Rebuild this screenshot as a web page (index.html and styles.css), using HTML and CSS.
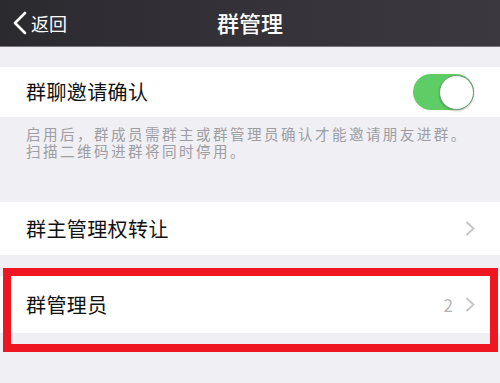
FILE: index.html
```html
<!DOCTYPE html>
<html lang="zh-CN">
<head>
<meta charset="utf-8">
<link rel="stylesheet" href="styles.css">
</head>
<body>
<div class="screen">
  <header class="navbar">
    <div class="back">
      <svg class="back-icon" width="16" height="24" viewBox="0 0 16 24"><polyline points="13,2 3,12 13,22" fill="none" stroke="#fff" stroke-width="2.6" stroke-linecap="round" stroke-linejoin="round"/></svg>
      <span class="back-text">返回</span>
    </div>
    <div class="title">群管理</div>
  </header>
  <div class="gap gap-top"></div>
  <div class="row row-1">
    <span class="label">群聊邀请确认</span>
    <div class="switch"><div class="knob"></div></div>
  </div>
  <div class="desc">
    <div class="desc-line">启用后，群成员需群主或群管理员确认才能邀请朋友进群。</div>
    <div class="desc-line">扫描二维码进群将同时停用。</div>
  </div>
  <div class="row row-2">
    <span class="label">群主管理权转让</span>
    <svg class="chev" width="10" height="15" viewBox="0 0 10 15"><polyline points="1.5,1 8.5,7.5 1.5,14" fill="none" stroke="#c4c4c8" stroke-width="1.8"/></svg>
  </div>
  <div class="gap gap-mid"></div>
  <div class="row row-3">
    <span class="label">群管理员</span>
    <span class="value">2</span>
    <svg class="chev" width="10" height="15" viewBox="0 0 10 15"><polyline points="1.5,1 8.5,7.5 1.5,14" fill="none" stroke="#c4c4c8" stroke-width="1.8"/></svg>
  </div>
  <div class="highlight"></div>
</div>
</body>
</html>
```
FILE: styles.css
```css
* { box-sizing: border-box; }
html, body { margin: 0; padding: 0; }
body {
  width: 500px;
  height: 383px;
  overflow: hidden;
  background: #efeff4;
  font-family: "Noto Sans CJK SC", "Noto Sans", sans-serif;
}
.screen {
  position: relative;
  width: 500px;
  height: 383px;
  background: #efeff4;
}
.navbar {
  position: relative;
  height: 47px;
  background: linear-gradient(to right, #2b2a2f, #36343a 60%, #3b383f);
  border-bottom: 1px solid #77767c;
  display: flex;
  align-items: center;
  justify-content: center;
}
.back {
  position: absolute;
  left: 12px;
  top: 0;
  height: 46px;
  display: flex;
  align-items: center;
  color: #fff;
}
.back-icon { display: block; margin-right: 3px; }
.back-text { font-size: 18px; line-height: 1; }
.title {
  color: #fff;
  font-size: 22px;
  font-weight: 500;
  line-height: 1;
  margin-top: -3px;
}
.gap-top { height: 20px; }
.gap-mid { height: 21px; }
.row {
  background: #fff;
  display: flex;
  align-items: center;
  padding: 0 25px 0 26px;
}
.row-1 { height: 50px; }
.row-2 { height: 53px; }
.row-3 { height: 57px; }
.label {
  flex: 1;
  font-size: 20px;
  letter-spacing: 0.4px;
  color: #111;
  line-height: 1;
}
.switch {
  width: 61px;
  height: 36px;
  border-radius: 18px;
  background: #5fcd66;
  display: flex;
  justify-content: flex-end;
  align-items: center;
  margin-right: 1px;
}
.knob {
  width: 35px;
  height: 35px;
  border-radius: 50%;
  background: #fff;
  border: 1px solid #6c9e6e;
  box-shadow: 0 1px 2px rgba(0,0,0,0.25);
}
.desc {
  height: 85px;
  padding: 10px 0 0 26px;
  color: #9d9da2;
}
.desc-line {
  font-family: "Liberation Sans", "Noto Sans CJK SC", sans-serif;
  font-size: 14.6px;
  letter-spacing: 2.4px;
  line-height: 17px;
  height: 17px;
  white-space: nowrap;
}
.value {
  font-size: 17px;
  color: #b3b3b8;
  margin-right: 12px;
  line-height: 1;
}
.chev { display: block; }
.highlight {
  position: absolute;
  left: 3px;
  top: 268px;
  width: 495px;
  height: 84px;
  border: 8px solid #ee1620;
}
```
